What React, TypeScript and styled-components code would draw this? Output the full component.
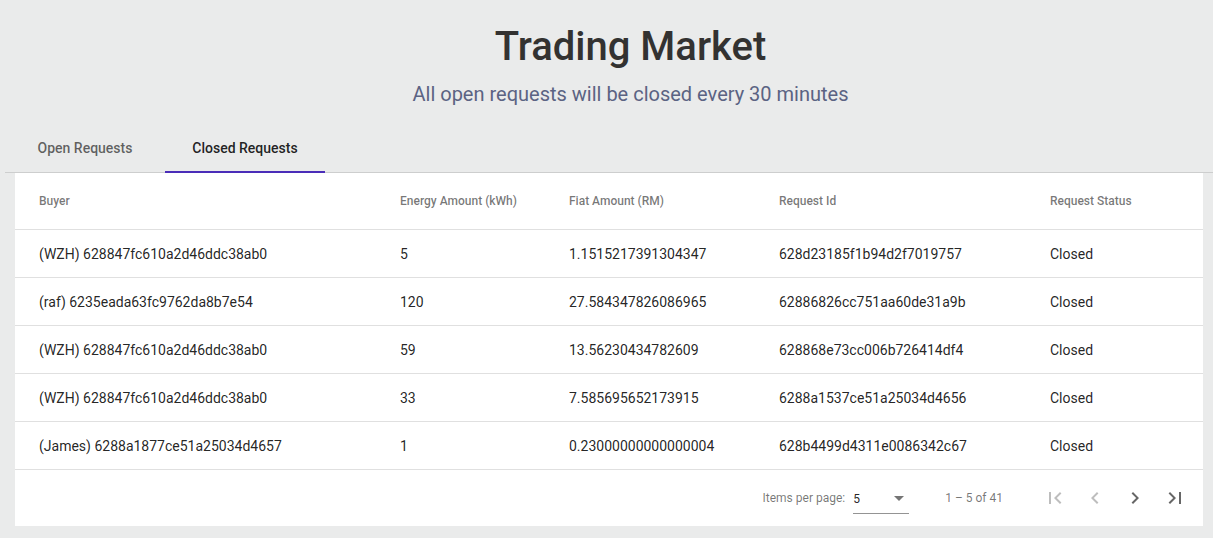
import React from "react";
import styled, { createGlobalStyle } from "styled-components";

const Global = createGlobalStyle`
  html, body { margin: 0; padding: 0; background: #eaebeb; }
  body { font-family: Roboto, "Helvetica Neue", sans-serif; }
  * { box-sizing: border-box; }
`;

const Page = styled.div`
  width: 1213px;
  min-height: 538px;
  background: #eaebeb;
  padding-top: 23px;
`;

const Title = styled.h1`
  margin: 0;
  text-align: center;
  font-size: 40px;
  line-height: 48px;
  font-weight: 500;
  color: #333231;
  padding-left: 48px;
`;

const Subtitle = styled.p`
  margin: 9px 0 0;
  text-align: center;
  font-size: 20px;
  line-height: 28px;
  font-weight: 400;
  color: #5b6383;
  padding-left: 48px;
`;

const TabSection = styled.div`
  margin-top: 16px;
  margin-left: 5px;
`;

const TabHeader = styled.div`
  display: flex;
  border-bottom: 1px solid rgba(0, 0, 0, 0.12);
`;

const Tab = styled.div<{ $active?: boolean }>`
  width: 160px;
  height: 48px;
  display: flex;
  align-items: center;
  justify-content: center;
  font-size: 14px;
  font-weight: 500;
  color: ${(p) => (p.$active ? "rgba(0,0,0,0.87)" : "rgba(0,0,0,0.6)")};
  position: relative;
  padding-bottom: 1px;
  &::after {
    content: "";
    display: ${(p) => (p.$active ? "block" : "none")};
    position: absolute;
    left: 0;
    right: 0;
    bottom: -1px;
    height: 2px;
    background: #4a2db8;
  }
`;

const Card = styled.div`
  margin: 0 10px 12px 15px;
  background: #ffffff;
`;

const cols = "385px 169px 210px 271px 153px";

const HeaderRow = styled.div`
  display: grid;
  grid-template-columns: ${cols};
  height: 57px;
  align-items: center;
  border-bottom: 1px solid rgba(0, 0, 0, 0.12);
`;

const Row = styled.div`
  display: grid;
  grid-template-columns: ${cols};
  height: 48px;
  align-items: center;
  border-bottom: 1px solid rgba(0, 0, 0, 0.12);
`;

const HeadCell = styled.div`
  font-size: 12px;
  font-weight: 500;
  color: rgba(0, 0, 0, 0.54);
  &:first-child { padding-left: 24px; }
  &:last-child { padding-right: 24px; }
`;

const Cell = styled.div`
  font-size: 14px;
  color: rgba(0, 0, 0, 0.87);
  &:first-child { padding-left: 24px; }
  &:last-child { padding-right: 24px; }
`;

const Paginator = styled.div`
  height: 56px;
  display: flex;
  align-items: center;
  justify-content: flex-end;
  padding: 0 8px;
  font-size: 12px;
  color: rgba(0, 0, 0, 0.54);
`;

const PageLabel = styled.span``;

const Select = styled.div`
  width: 56px;
  margin-left: 8px;
  margin-top: 6px;
  height: 26px;
  display: flex;
  align-items: center;
  justify-content: space-between;
  border-bottom: 1px solid rgba(0, 0, 0, 0.42);
  color: rgba(0, 0, 0, 0.87);
  padding: 0 5px 4px 0;
`;

const Arrow = styled.span`
  width: 0;
  height: 0;
  border-left: 5px solid transparent;
  border-right: 5px solid transparent;
  border-top: 5px solid rgba(0, 0, 0, 0.54);
`;

const Range = styled.span`
  margin: 0 32px 0 36px;
`;

const IconBtn = styled.button<{ $disabled?: boolean }>`
  width: 40px;
  height: 40px;
  border: none;
  background: transparent;
  padding: 0;
  display: flex;
  align-items: center;
  justify-content: center;
  color: ${(p) => (p.$disabled ? "rgba(0,0,0,0.26)" : "rgba(0,0,0,0.6)")};
  svg { width: 24px; height: 24px; fill: currentColor; }
`;

const data = [
  ["(WZH) 628847fc610a2d46ddc38ab0", "5", "1.1515217391304347", "628d23185f1b94d2f7019757", "Closed"],
  ["(raf) 6235eada63fc9762da8b7e54", "120", "27.584347826086965", "62886826cc751aa60de31a9b", "Closed"],
  ["(WZH) 628847fc610a2d46ddc38ab0", "59", "13.56230434782609", "628868e73cc006b726414df4", "Closed"],
  ["(WZH) 628847fc610a2d46ddc38ab0", "33", "7.585695652173915", "6288a1537ce51a25034d4656", "Closed"],
  ["(James) 6288a1877ce51a25034d4657", "1", "0.23000000000000004", "628b4499d4311e0086342c67", "Closed"],
];

export default function App() {
  return (
    <Page>
      <Global />
      <Title>Trading Market</Title>
      <Subtitle>All open requests will be closed every 30 minutes</Subtitle>
      <TabSection>
        <TabHeader>
          <Tab>Open Requests</Tab>
          <Tab $active>Closed Requests</Tab>
        </TabHeader>
      </TabSection>
      <Card>
        <HeaderRow>
          <HeadCell>Buyer</HeadCell>
          <HeadCell>Energy Amount (kWh)</HeadCell>
          <HeadCell>Fiat Amount (RM)</HeadCell>
          <HeadCell>Request Id</HeadCell>
          <HeadCell>Request Status</HeadCell>
        </HeaderRow>
        {data.map((r, i) => (
          <Row key={i}>
            {r.map((c, j) => (
              <Cell key={j}>{c}</Cell>
            ))}
          </Row>
        ))}
        <Paginator>
          <PageLabel>Items per page:</PageLabel>
          <Select>
            <span>5</span>
            <Arrow />
          </Select>
          <Range>1 – 5 of 41</Range>
          <IconBtn $disabled aria-label="First page">
            <svg viewBox="0 0 24 24"><path d="M18.41 16.59L13.82 12l4.59-4.59L17 6l-6 6 6 6zM6 6h2v12H6z" /></svg>
          </IconBtn>
          <IconBtn $disabled aria-label="Previous page">
            <svg viewBox="0 0 24 24"><path d="M15.41 7.41L14 6l-6 6 6 6 1.41-1.41L10.83 12z" /></svg>
          </IconBtn>
          <IconBtn aria-label="Next page">
            <svg viewBox="0 0 24 24"><path d="M10 6L8.59 7.41 13.17 12l-4.58 4.59L10 18l6-6z" /></svg>
          </IconBtn>
          <IconBtn aria-label="Last page">
            <svg viewBox="0 0 24 24"><path d="M5.59 7.41L10.18 12l-4.59 4.59L7 18l6-6-6-6zM16 6h2v12h-2z" /></svg>
          </IconBtn>
        </Paginator>
      </Card>
    </Page>
  );
}
